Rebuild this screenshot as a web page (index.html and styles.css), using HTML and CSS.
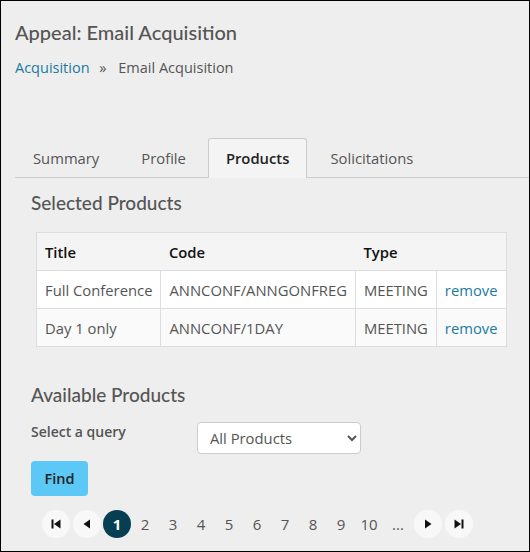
FILE: index.html
```html
<!DOCTYPE html>
<html lang="en">
<head>
    <meta charset="UTF-8">
    <title>Appeal: Email Acquisition</title>
    <link rel="stylesheet" href="styles.css">
</head>
<body>
    <div class="page">
        <h1 class="page-title">Appeal: Email Acquisition</h1>
        <div class="breadcrumb">
            <a href="#">Acquisition</a>
            <span class="sep">»</span>
            <span>Email Acquisition</span>
        </div>

        <ul class="tabs">
            <li class="tab tab-summary">Summary</li>
            <li class="tab tab-profile">Profile</li>
            <li class="tab active">Products</li>
            <li class="tab tab-solicit">Solicitations</li>
        </ul>

        <div class="panel">
            <h2 class="section-title">Selected Products</h2>
            <table class="products">
                <thead>
                    <tr>
                        <th>Title</th>
                        <th>Code</th>
                        <th>Type</th>
                        <th></th>
                    </tr>
                </thead>
                <tbody>
                    <tr>
                        <td>Full Conference</td>
                        <td>ANNCONF/ANNGONFREG</td>
                        <td>MEETING</td>
                        <td><a href="#">remove</a></td>
                    </tr>
                    <tr>
                        <td>Day 1 only</td>
                        <td>ANNCONF/1DAY</td>
                        <td>MEETING</td>
                        <td><a href="#">remove</a></td>
                    </tr>
                </tbody>
            </table>

            <h2 class="section-title available">Available Products</h2>
            <div class="query-row">
                <label class="query-label">Select a query</label>
                <select class="query-select">
                    <option>All Products</option>
                </select>
            </div>
            <button class="btn-find">Find</button>

            <div class="pager">
                <span class="pg-btn">
                    <svg width="12" height="12" viewBox="0 0 12 12"><rect x="1.5" y="1.5" width="2" height="9" fill="#111"/><path d="M10.5 1.5 L4 6 L10.5 10.5 Z" fill="#111"/></svg>
                </span>
                <span class="pg-btn">
                    <svg width="12" height="12" viewBox="0 0 12 12"><path d="M9 1.5 L2.5 6 L9 10.5 Z" fill="#111"/></svg>
                </span>
                <span class="pg-num current">1</span>
                <span class="pg-num">2</span>
                <span class="pg-num">3</span>
                <span class="pg-num">4</span>
                <span class="pg-num">5</span>
                <span class="pg-num">6</span>
                <span class="pg-num">7</span>
                <span class="pg-num">8</span>
                <span class="pg-num">9</span>
                <span class="pg-num">10</span>
                <span class="pg-num dots">...</span>
                <span class="pg-btn">
                    <svg width="12" height="12" viewBox="0 0 12 12"><path d="M3 1.5 L9.5 6 L3 10.5 Z" fill="#111"/></svg>
                </span>
                <span class="pg-btn">
                    <svg width="12" height="12" viewBox="0 0 12 12"><path d="M1.5 1.5 L8 6 L1.5 10.5 Z" fill="#111"/><rect x="8.5" y="1.5" width="2" height="9" fill="#111"/></svg>
                </span>
            </div>
        </div>
    </div>
</body>
</html>
```

FILE: styles.css
```css
html, body {
    margin: 0;
    padding: 0;
}
body {
    font-family: "Open Sans", Arial, sans-serif;
    color: #555;
    background: #eeeeee;
}
.page {
    box-sizing: border-box;
    width: 530px;
    height: 552px;
    border: 1px solid #000;
    padding: 0 0 0 14px;
    overflow: hidden;
}
.page-title {
    font-family: Lato, "Open Sans", sans-serif;
    font-weight: 500;
    font-size: 20px;
    color: #555;
    margin: 18px 0 0 0;
    line-height: 26px;
}
.breadcrumb {
    margin-top: 13px;
    font-size: 14.5px;
    line-height: 20px;
}
.breadcrumb a {
    color: #1b7aa3;
    text-decoration: none;
}
.breadcrumb .sep {
    margin: 0 8px 0 6px;
}

/* tab strip */
.tabs {
    list-style: none;
    margin: 60px 0 0 0;
    padding: 0;
    display: flex;
    border-bottom: 1px solid #ccc;
}
.tab {
    padding: 0 20px;
    height: 38px;
    line-height: 38px;
    font-size: 14.8px;
    color: #555;
    border: 1px solid transparent;
    border-bottom: none;
    margin-bottom: -1px;
}
.tab-summary {
    padding-left: 17px;
}
.tab-profile {
    padding-right: 21px;
}
.tab-solicit {
    padding-left: 22px;
}
.tab.active {
    background: #f4f4f4;
    border-color: #ccc;
    border-radius: 3px 3px 0 0;
    color: #222;
    font-weight: 600;
    height: 39px;
    padding: 0 17px;
}

.panel {
    padding-left: 16px;
}
.section-title {
    font-family: Lato, "Open Sans", sans-serif;
    font-weight: 500;
    font-size: 19px;
    color: #555;
    margin: 13px 0 0 0;
    line-height: 24px;
}
.products {
    margin: 17px 0 0 5px;
    border-collapse: collapse;
    width: 470px;
    font-size: 14.8px;
}
.products th, .products td {
    border: 1px solid #ddd;
    text-align: left;
    padding: 0 8px;
    height: 37px;
    white-space: nowrap;
}
.products thead tr {
    background: #f4f4f4;
}
.products th {
    color: #111;
    font-weight: 600;
    border-left: none;
    border-right: none;
}
.products th:first-child {
    border-left: 1px solid #ddd;
}
.products th:last-child {
    border-right: 1px solid #ddd;
}
.products tbody tr:nth-child(1) {
    background: #fff;
}
.products tbody tr:nth-child(2) {
    background: #fafafa;
}
.products td a {
    color: #1b7aa3;
    text-decoration: none;
}
.section-title.available {
    margin-top: 36px;
}
.query-row {
    display: flex;
    align-items: flex-start;
    margin-top: 15px;
}
.query-label {
    width: 166px;
    font-weight: 600;
    font-size: 14px;
    color: #555;
    line-height: 20px;
    margin-top: 0;
}
.query-select {
    width: 164px;
    height: 32px;
    font-family: "Open Sans", Arial, sans-serif;
    font-size: 14.8px;
    color: #555;
    background: #fff;
    border: 1px solid #ccc;
    border-radius: 4px;
    padding: 0 8px;
    margin-top: 0;
}
.btn-find {
    display: block;
    margin-top: 7px;
    width: 57px;
    height: 35px;
    background: #5bc8f5;
    border: none;
    border-radius: 4px;
    font-family: "Open Sans", Arial, sans-serif;
    font-size: 14.5px;
    font-weight: 600;
    color: #222;
}

/* pagination */
.pager {
    display: flex;
    align-items: center;
    margin: 14px 0 0 11px;
    font-size: 15px;
}
.pg-btn, .pg-num {
    width: 28px;
    height: 28px;
    border-radius: 50%;
    display: flex;
    align-items: center;
    justify-content: center;
    color: #555;
}
.pg-btn {
    background: #f8f8f8;
    margin-right: 3px;
}
.pg-btn:nth-child(2) {
    margin-right: 2px;
}
.pg-num.current {
    background: #063e52;
    color: #fff;
    font-weight: 700;
}
.pg-num.dots {
    width: 30px;
    margin-right: 1px;
}
```
